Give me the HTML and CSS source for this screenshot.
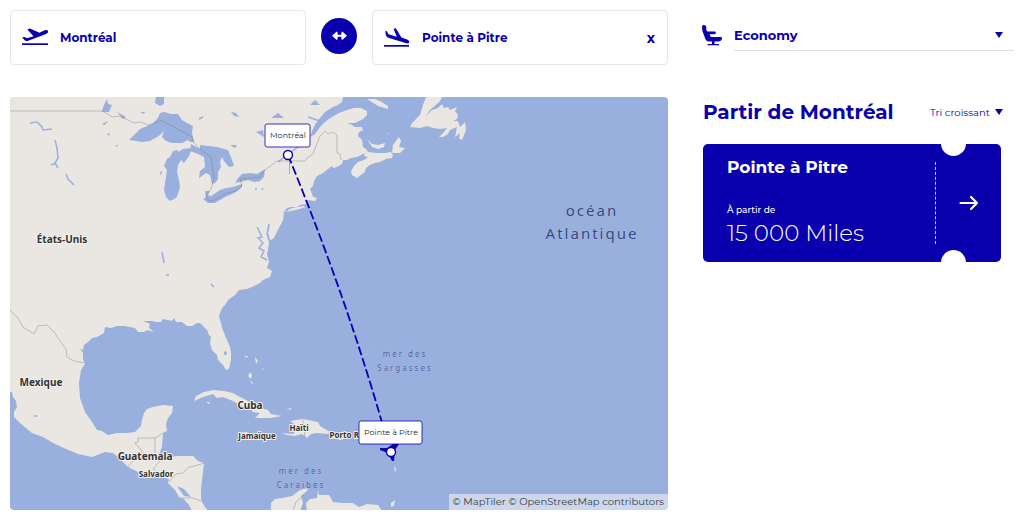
FILE: index.html
```html
<!DOCTYPE html>
<html lang="fr">
<head>
    <meta charset="utf-8">
    <meta name="viewport" content="width=device-width, initial-scale=1">
    <title>Partir de Montréal</title>
    <link rel="stylesheet" href="styles.css">
</head>
<body>
    <main class="page">

        <!-- Search fields -->
        <form class="search">
            <label class="field">
                <svg class="field-icon" viewBox="0 0 26 19" aria-label="Départ">
                    <path d="M0 9.600 2.500 9l2.500 1.300L11.500 8.300 5.300 1.500 8 .6l9.500 4.200L22 2.600c2-.9 3.800-.9 4 .7.200 1.500-1 2.300-2.500 2.900L5.500 12.900c-1.500.4-2.300.2-3-.8z"/>
                    <path d="M0 15.300h26V17H0z"/>
                </svg>
                <input type="text" name="from" value="Montréal">
            </label>
            <button type="button" class="swap" aria-label="Inverser">
                <svg viewBox="0 0 16 10"><path d="M0 5l5-4.500L6 1.500V4h4V1.500L11 .5 16 5l-5 4.500-1-1V6H6v2.500l-1 1z"/></svg>
            </button>
            <div class="field">
                <svg class="field-icon" viewBox="0 0 26 19">
                    <path d="M1.500 2.800l1.300.4L4.500 6.300l8.300 2.400L9.500.8l2.300-.6 5.600 9.400 5.600 2c1.700.7 2.500 1.600 2.100 2.800-.4 1.100-1.300 1.200-2.600.9L5 10C2.500 9.200 1.600 7.600 1.500 5z"/>
                    <path d="M0 17h25v1.700H0z"/>
                </svg>
                <input type="text" name="to" value="Pointe à Pitre" aria-label="Arrivée">
                <button type="button" class="clear" aria-label="Effacer">x</button>
            </div>
        </form>

        <div class="cabin">
            <svg class="seat" viewBox="0 0 20 21" aria-hidden="true">
                <path d="M0 2C0 .4 1 0 2 0s2.300.7 2.300 2v3l1 1.500H12.500c1.800 0 1.800 2.700 0 2.700H7.500L9 12h9.500c1.500 0 1.700 1 1.300 2.300-.5 1.500-1.700 2.100-3.200 2.100H12.500V19H17v1.300H5.500V19H10v-2.600H7c-2 0-3-.9-3.600-2.500L.4 6z"/>
            </svg>
            <div class="select-wrap cabin-select">
                <select name="cabin" aria-label="Cabine">
                    <option>Economy</option>
                </select>
            </div>
        </div>

        <!-- Route map -->
        <section class="map">
            <svg viewBox="10 97 658 413" role="img" aria-label="Montréal - Pointe à Pitre">
                <g class="land">
                    <path d="M10 97H343L342 102 338 105 333 107 325 112 320 118 316 123 312 131 310 137 315 134 320 127 326 121 332 117 339 113 347 110 354 108 361 108 367 111 367 115 363 119 355 123 347 123 352 125 355 127 362 127 363 130 359 132 358 136 362 140 363 147 366 149 368 152 377 153 385 153 391 152 393 155 392 158 386 159 380 162 375 163 370 165 366 168 365 172 361 175 357 178 352 175 351 171 354 166 358 162 364 160 368 157 364 156 365 153 361 155 357 157 351 158 347 160 343 160 342 164 337 167 333 168 332 166 328 169 323 173 317 176 314 181 313 186 310 189 312 194 313 197 317 198 315 201 307 200 306 204 300 205 297 207 291 207 287 208 284 212 283 220 279 228 276 234 273 239 270 240 268 233 270 225 275 222 270 225 267 232 269 242 268 250 267 254 269 262 267 268 272 271 270 277 263 280 260 283 252 287 247 289 239 290 235 295 228 300 225 305 222 308 220 313 219 317 221 323 222 328 227 340 230 347 231 352 231 360 229 369 226 370 223 365 218 360 217 355 212 350 210 343 211 337 209 335 207 330 205 328 200 323 197 323 192 326 187 326 182 322 176 322 174 318 172 321 163 319 161 322 157 322 152 321 143 321 150 324 149 328 154 332 147 330 144 332 138 332 135 328 130 327 124 326 117 326 111 328 105 327 104 333 97 337 92 338 88 342 84 345 83 350 80 349 83 353 83 359 85 364 81 370 79 383 80 398 85 412 92 422 97 430 102 431 108 435 117 433 127 433 135 432 141 426 142 420 144 413 147 409 153 407 163 405 173 406 172 413 168 418 166 424 167 431 163 433 162 447 160 452 157 456 167 457 178 456 187 456 193 456 198 461 204 463 203 472 202 480 201 490 201 497 202 502 205 507 208 511H192L189 505 183 498 179 497 175 490 168 483 169 479 160 477 148 474 138 472 128 467 118 457 113 453 105 452 100 454 92 457 78 454 66 449 55 444 43 437 32 433 20 423 14 417 14 412 17 407 16 401 13 397 12 392 10 392z"/>
                    <!-- Newfoundland, Prince Edward, Cape Breton, Anticosti -->
                    <path d="M410 127 412 123 415 120 420 115 423 105 426 97H442L440 101 437 104 430 110 426 116 432 110 438 108 442 104 444 108 448 107 450 110 457 107 455 111 458 115 457 119 453 121 458 121 460 127 465 122 466 130 462 140 459 138 460 133 455 137 457 127 450 130 448 134 443 137 439 137 444 132 447 128 440 129 433 128 427 126 420 128z"/>
                    <path d="M367 139 372 144 378 145 385 143 384 147 378 149 372 147zM392 153 393 145 399 137 401 141 399 147 405 148 400 153zM367 99 375 99 380 101 388 106 388 109 378 106zM285 212 292 208 303 206 306 207 296 210z"/>
                    <!-- Islands -->
                    <path d="M194 401 196 396 204 392 213 390 224 391 233 393 240 397 250 402 257 407 268 410 271 414 282 416 270 418 255 418 260 413 253 412 250 408 242 406 233 401 223 397 217 398 213 394 203 397zM206 402 210 402 209 404zM281 433 293 434 296 431 293 423 290 421 303 419 318 422 320 426 330 432 328 434 317 433 311 434 307 438 302 434 295 436 287 435zM331 434 345 434 348 437 341 440 331 438zM238 433 246 432 257 437 250 438z"/>
                    <path d="M250 372 252 375 251 379 248 376zM250 380 253 383 252 384zM244 356 248 356 247 358zM255 357 258 361 256 364zM262 368 264 369 263 370zM287 409 292 408 290 410zM394 465 396 469 395 473zM374 347h1v1zM388 133h1v1h-1z"/>
                    <path d="M271 511V503L275 499 282 498 292 496 300 490 308 488 307 491 301 496 303 503 300 511zM307 511 306 503 310 499 317 498 318 490 319 495 329 495 333 502 342 503 353 503 359 507 367 504 378 505 382 511zM391 503 395 500 394 506 391 507z"/>
                </g>
                <g class="water">
                    <path d="M129 140 140 129 152 124 158 118 160 113 164 112 171 114 178 114 182 120 187 123 193 126 192 133 194 142 190 142 188 140 182 143 172 143 166 141 162 137 164 131 160 135 157 137 150 141 142 142 136 141zM164 166 167 159 170 157 173 151 178 150 178 152 183 149 192 148 189 156 184 163 181 160 178 165 177 172 179 180 180 187 178 194 176 198 170 201 166 197 164 190 165 183 167 170zM191 144 200 149 200 145 217 147 228 150 231 157 234 166 229 167 224 161 222 157 220 162 221 167 218 172 218 179 215 183 212 184 210 175 206 173 199 178 200 171 205 167 204 157 198 154 190 151zM203 199 206 197 205 191 210 191 208 195 211 196 220 190 226 188 233 187 242 184 242 187 236 192 232 194 225 197 220 200 215 203 208 203zM235 183 238 178 242 174 250 173 257 174 265 169 264 177 260 181 255 182 248 180 240 182z"/>
                    <path d="M103 107 105 103 107 99 108 104 112 105 109 112 102 112zM156 97h8v7l-4 2-5-3zM117 112 126 117 123 119zM102 124 108 121 105 125zM107 134 110 133 109 136zM115 145h3l-1 2zM230 145 237 145 235 148zM231 112 236 113 239 117 234 116zM271 118 278 113 284 118zM310 105 315 100 320 105zM160 172 162 171 161 176zM224 352 226 351 227 353 226 355 224 355zM177 486 184 489 191 497 184 496zM32 416 37 415 37 417zM140 112 145 112 144 114zM256 132 263 130 264 137zM289 160 290 160 290 174 289 174z"/>
                    <path class="stream" d="M30 123 37 122 42 127 43 130 52 129M55 140 57 148 58 158 55 163 58 168M51 165 56 163M66 174 68 179 74 185M162 252 164 263M166 275h3M211 284 214 287M257 227 262 237 258 238 263 243 259 248 264 251 261 257 267 260M269 224 267 234 269 240M199 119 203 117M256 188 256 190M263 188 262 190M315 180h2M308 117 320 121M310 137 301 145 288 154 278 162"/>
                </g>
                <path class="border" d="M10 111H102L106 113 112 117 119 116 126 119 134 123 141 122 148 125 156 123 161 120 192 137 194 143 200 149 211 157 214 178 211 189 206 195 209 201 215 200 224 194 236 191 242 186 240 179 260 177 265 170 277 161H305L307 158 313 154 316 146 320 136 325 131 328 134 333 132 337 135 337 153 340 154 341 160M10 310 18 318 23 327 34 334 38 326 47 325 54 332 60 341 66 349 67 357 74 361 85 363M163 433 155 438H138V442L135 443 141 450 144 456 137 456 128 467M155 438V456M160 461 153 469 157 472M204 463 195 466 189 467 183 473 176 474 169 482M183 498 192 498 202 501M303 420 305 437M304 495 296 502 293 511"/>

                <g class="country">
                    <text x="62" y="243" class="medium">États-Unis</text>
                    <text x="41" y="386" class="medium">Mexique</text>
                    <text x="250" y="409" class="medium">Cuba</text>
                    <text x="145" y="460" class="medium">Guatemala</text>
                    <text x="156" y="477">Salvador</text>
                    <text x="257" y="439">Jamaïque</text>
                    <text x="299" y="431">Haïti</text>
                    <text x="350" y="438">Porto Rico</text>
                </g>
                <g class="ocean">
                    <text x="592" y="216" class="large">océan</text>
                    <text x="592" y="239" class="large">Atlantique</text>
                    <text x="405" y="357">mer des</text>
                    <text x="405" y="371">Sargasses</text>
                    <text x="301" y="474">mer des</text>
                    <text x="301" y="488">Caraïbes</text>
                </g>

                <path class="route" d="M288 155Q349 304 387 440"/>
                <path class="plane" d="M380 448 387 448 393 444 399 444 395 450 394 461 392 461 388 453 380 450z"/>
                <g class="pin">
                    <circle cx="288" cy="155" r="4.500"/>
                    <rect x="265" y="124" width="45" height="23" rx="2"/>
                    <text x="288" y="138">Montréal</text>
                </g>
                <g class="pin">
                    <circle cx="391" cy="452" r="4.500"/>
                    <rect x="359" y="421" width="63" height="23" rx="2"/>
                    <text x="391" y="435">Pointe à Pitre</text>
                </g>
            </svg>
            <div class="attribution">
                <a href="#">© MapTiler</a> <a href="#">© OpenStreetMap contributors</a>
            </div>
        </section>

        <!-- Offers -->
        <section class="offers">
            <div class="offers-head">
                <h1>Partir de Montréal</h1>
                <div class="select-wrap sort">
                    <select name="sort" aria-label="Tri">
                        <option>Tri croissant</option>
                    </select>
                </div>
            </div>
            <a class="ticket" href="#">
                <div class="ticket-body">
                    <h2>Pointe à Pitre</h2>
                    <p class="from">À partir de</p>
                    <p class="price">15 000 Miles</p>
                </div>
                <div class="ticket-stub">
                    <svg viewBox="0 0 20 16" aria-hidden="true"><path d="M1.500 8H18M12 2l6 6-6 6"/></svg>
                </div>
            </a>
        </section>
    </main>
</body>
</html>
```

FILE: styles.css
```css
* {
    box-sizing: border-box;
}

body {
    margin: 0;
    background: #fff;
    color: #0a00ad;
    font-family: Montserrat, Inter, sans-serif;
}

input, select, button {
    border: none;
    padding: 0;
    background: none;
    color: inherit;
    font-family: inherit;
}

h1, h2, p {
    margin: 0;
}

svg {
    display: block;
}

.page {
    display: grid;
    grid-template-columns: 658fr 312fr;
    column-gap: 34px;
    row-gap: 32px;
    padding: 10px;
}

/* search */
.search {
    display: flex;
    align-items: center;
    gap: 15px;
}

.field {
    flex: 1;
    min-width: 0;
    height: 55px;
    display: flex;
    align-items: center;
    gap: 12px;
    padding: 0 12px 0 11px;
    border: 1px solid #e6e6e6;
    border-radius: 4px;
}

.field-icon {
    flex: none;
    width: 26px;
    height: 19px;
    fill: #0a00ad;
}

.field input {
    flex: 1;
    min-width: 0;
    font-size: 12px;
    font-weight: 700;
}

.clear {
    font-size: 14px;
    font-weight: 700;
}

.swap {
    flex: none;
    width: 36px;
    height: 36px;
    margin-bottom: 4px;
    display: flex;
    align-items: center;
    justify-content: center;
    border-radius: 50%;
    background: #0a00ad;
}

.swap svg {
    width: 15px;
    fill: #fff;
}

/* selects */
.select-wrap {
    position: relative;
}

.select-wrap::after {
    content: "";
    position: absolute;
    right: 0;
    top: 50%;
    margin-top: -3px;
    border: solid transparent;
    border-width: 6px 4px 0;
    border-top-color: #0a00ad;
    pointer-events: none;
}

.select-wrap select {
    appearance: none;
    display: block;
    width: 100%;
}

.cabin {
    display: flex;
    align-items: flex-start;
    gap: 12px;
    padding-top: 10px;
}

.seat {
    width: 20px;
    height: 21px;
    margin-top: 5px;
    fill: #0a00ad;
}

.cabin-select {
    flex: 1;
    border-bottom: 1px solid #e0e0e0;
}

.cabin-select::after {
    right: 11px;
}

.cabin-select select {
    height: 30px;
    font-size: 13px;
    font-weight: 700;
}

/* map */
.map {
    position: relative;
    align-self: start;
    overflow: hidden;
    border-radius: 4px;
    background: #99afdd;
}

.map svg {
    width: 100%;
}

.land {
    fill: #eae7e2;
}

.water {
    fill: #99afdd;
}

.stream {
    fill: none;
    stroke: #99afdd;
    stroke-width: 1.5;
}

.border {
    fill: none;
    stroke: #777;
    stroke-opacity: 0.5;
    stroke-width: 0.8;
}

.map text {
    text-anchor: middle;
    paint-order: stroke;
    stroke-linejoin: round;
}

.country {
    font-family: "Noto Sans", sans-serif;
    font-size: 8px;
    font-weight: 700;
    fill: #333;
    stroke: #f3f1ee;
    stroke-width: 2;
}

.country .medium {
    font-size: 10px;
}

.ocean {
    font-family: "Noto Sans", sans-serif;
    font-size: 8px;
    letter-spacing: 2px;
    fill: #4a62a6;
    stroke: #a9bbe3;
    stroke-width: 1;
}

.ocean .large {
    font-size: 15px;
    fill: #334a80;
}

.route {
    fill: none;
    stroke: #0a00ad;
    stroke-width: 1.8;
    stroke-dasharray: 9 3;
}

.plane {
    fill: #0a00ad;
}

.pin circle, .pin rect {
    fill: #fff;
    stroke: #0a00ad;
}

.pin circle {
    stroke-width: 1.4;
}

.pin rect {
    stroke-width: 0.8;
}

.pin text {
    font-size: 8px;
    fill: #222;
}

.attribution {
    position: absolute;
    right: 0;
    bottom: 0;
    padding: 0 4px;
    background: rgba(255, 255, 255, 0.5);
    font-size: 10px;
    line-height: 16px;
}

.attribution a {
    color: #404040;
    text-decoration: none;
}

/* offers */
.offers {
    padding: 0 13px 0 1px;
}

.offers-head {
    display: flex;
    align-items: center;
    justify-content: space-between;
    height: 30px;
    margin-bottom: 17px;
}

.offers h1 {
    font-size: 20px;
    font-weight: 700;
    white-space: nowrap;
}

.sort {
    width: 71px;
}

.sort::after {
    right: -2px;
}

.sort select {
    height: 14px;
    font-size: 10px;
}

.ticket {
    position: relative;
    display: flex;
    min-height: 118px;
    overflow: hidden;
    border-radius: 5px;
    background: #0a00ad;
    color: #fff;
    text-decoration: none;
}

.ticket::before, .ticket::after {
    content: "";
    position: absolute;
    right: 35px;
    width: 25px;
    height: 25px;
    border-radius: 50%;
    background: #fff;
}

.ticket::before {
    top: -13px;
}

.ticket::after {
    bottom: -13px;
}

.ticket-body {
    flex: 1;
    padding: 11px 0 12px 24px;
}

.ticket h2 {
    margin-bottom: 25px;
    font-size: 17px;
    line-height: 24px;
}

.from {
    font-size: 9px;
    font-weight: 500;
    line-height: 12px;
}

.price {
    font-size: 23px;
    font-weight: 300;
    line-height: 34px;
}

.ticket-stub {
    width: 66px;
    margin: 18px 0;
    display: flex;
    align-items: center;
    justify-content: center;
    border-left: 1px dashed #c8c5ee;
}

.ticket-stub svg {
    width: 20px;
    fill: none;
    stroke: #fff;
    stroke-width: 2.2;
    stroke-linecap: round;
    stroke-linejoin: round;
}
```
